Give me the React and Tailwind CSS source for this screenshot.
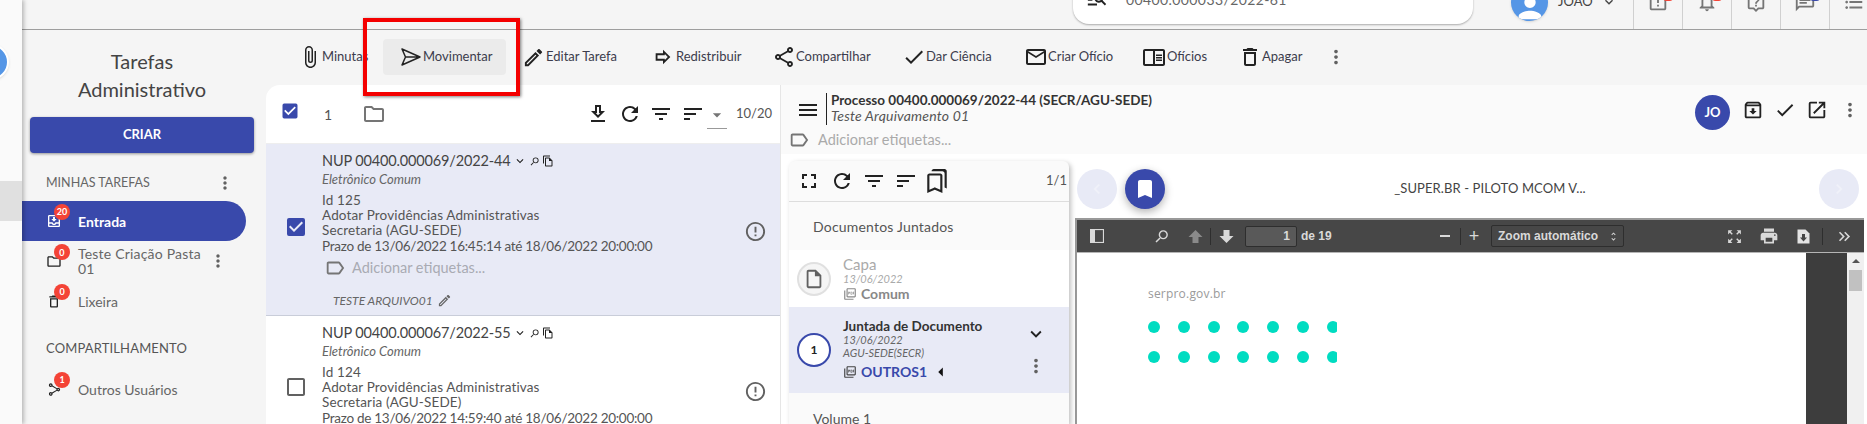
import React from 'react'
import {
  MdAttachFile, MdOutlineCreate, MdOutlineForward, MdOutlineShare, MdCheck, MdMailOutline,
  MdOutlineChromeReaderMode, MdMoreVert, MdOutlineLabel, MdOutlineFolder,
  MdOutlineGetApp, MdRefresh, MdFilterList, MdSort, MdArrowDropDown, MdMenu, MdFullscreen,
  MdOutlineBookmarks, MdBookmark, MdOutlineInsertDriveFile, MdOutlinePictureAsPdf,
  MdOutlineArchive, MdOpenInNew, MdCheckBox, MdCheckBoxOutlineBlank, MdErrorOutline,
  MdOutlineMoveToInbox, MdSearch, MdOutlineFileCopy, MdExpandMore, MdArrowLeft, MdChevronLeft,
  MdChevronRight, MdPrint, MdKeyboardDoubleArrowRight, MdUnfoldMore, MdOutlineDelete,
  MdOutlineNotifications, MdOutlineLiveHelp, MdOutlineChat, MdFormatListBulleted,
  MdOutlineAssignmentLate, MdOutlineManageSearch, MdPerson, MdKeyboardArrowDown,
  MdOutlineZoomOutMap
} from 'react-icons/md'

function PlaneIcon() {
  return (
    <svg width="20" height="18" viewBox="0 0 20 18" fill="none" stroke="#222" strokeWidth="1.5" strokeLinejoin="round">
      <path d="M1 1 L19 9 L1 17 L4.5 9 Z M4.5 9 H19" />
    </svg>
  )
}

function PdfArrow({ up, className }) {
  return (
    <svg className={className} width="15" height="15" viewBox="0 0 15 15" fill="currentColor">
      <path d={up ? 'M7.5 1 L14.5 8 H10.5 V14 H4.5 V8 H0.5 Z' : 'M7.5 14 L14.5 7 H10.5 V1 H4.5 V7 H0.5 Z'} />
    </svg>
  )
}

function PdfSave({ className }) {
  return (
    <svg className={className} width="13" height="15" viewBox="0 0 13 15">
      <path d="M0.5 0.5 H8.5 L12.5 4.5 V14.5 H0.5 Z" fill="#e4e4e4" />
      <path d="M5 5 H8 V8.5 H10 L6.5 12.5 L3 8.5 H5 Z" fill="#474747" />
    </svg>
  )
}

const actions = [
  { label: 'Minutas', icon: <MdAttachFile size={24} />, w: 'w-[96px]', gap: 'gap-0', pad: 'pl-[11px]' },
  { label: 'Movimentar', icon: <PlaneIcon />, w: 'w-[123px]', gap: 'gap-[2px]', pad: 'pl-[18px]', active: true },
  { label: 'Editar Tarefa', icon: <MdOutlineCreate size={23} />, w: 'w-[126px]', gap: 'gap-[1px]', pad: 'pl-[16px]' },
  { label: 'Redistribuir', icon: <MdOutlineForward size={22} />, w: 'w-[122px]', gap: 'gap-[2px]', pad: 'pl-[20px]' },
  { label: 'Compartilhar', icon: <MdOutlineShare size={24} />, w: 'w-[130px]', gap: 'gap-0', pad: 'pl-[18px]' },
  { label: 'Dar Ciência', icon: <MdCheck size={24} />, w: 'w-[122px]', gap: 'gap-0', pad: 'pl-[18px]' },
  { label: 'Criar Ofício', icon: <MdMailOutline size={24} />, w: 'w-[118px]', gap: 'gap-0', pad: 'pl-[18px]' },
  { label: 'Ofícios', icon: <MdOutlineChromeReaderMode size={24} />, w: 'w-[97px]', gap: 'gap-[1px]', pad: 'pl-[18px]' },
  { label: 'Apagar', icon: <MdOutlineDelete size={24} />, w: 'w-[97px]', gap: 'gap-0', pad: 'pl-[17px]' },
]

function NavBadge({ n }) {
  return (
    <span className="absolute left-[8px] top-[-9px] w-[16px] h-[16px] rounded-full bg-[#f44336] text-white text-[9px] font-bold flex items-center justify-center">
      {n}
    </span>
  )
}

function NavIcon({ children, n }) {
  return (
    <span className="relative w-[16px] h-[16px] flex items-center justify-center shrink-0">
      {children}
      <NavBadge n={n} />
    </span>
  )
}

function TaskItem({ selected, nup, id, prazo, className }) {
  return (
    <div className={`flex ${selected ? 'bg-[#e8eaf6] border-b border-[#c9cdd9]' : 'bg-white'} ${className}`}>
      <div className="w-[56px] shrink-0 flex items-center pl-[19px] text-[#616161]">
        {selected
          ? <MdCheckBox size={24} className="text-[#3949ab] -mt-[6px] -ml-[1px]" />
          : <MdCheckBoxOutlineBlank size={24} className="mt-[4px] -ml-[1px]" />}
      </div>
      <div className="flex-1 pt-[8px] text-[#555]">
        <div className="flex items-center h-[18px] text-[14.5px] text-[#444] tracking-[-0.15px]">
          {nup}
          <MdKeyboardArrowDown size={14} className="ml-[2px] text-[#222]" />
          <MdSearch size={11} className="ml-[2px] text-[#222] -scale-x-100" />
          <MdOutlineFileCopy size={12} className="ml-[2px] text-[#222]" />
        </div>
        <div className="text-[13px] italic leading-[16px] mt-[1px] text-[#666]">Eletrônico Comum</div>
        <div className="text-[13.5px] leading-[15.2px] mt-[6px] tracking-[0.14px]">
          <div>Id {id}</div>
          <div>Adotar Providências Administrativas</div>
          <div>Secretaria (AGU-SEDE)</div>
          <div className="tracking-[-0.27px]">{prazo}</div>
        </div>
        {selected && (
          <>
            <div className="flex items-center h-[20px] mt-[4px] pl-[2px] text-[#a9abb3] text-[14.5px]">
              <MdOutlineLabel size={22} className="text-[#757575]" />
              <span className="ml-[6px]">Adicionar etiquetas...</span>
            </div>
            <div className="flex items-center h-[16px] mt-[15px] pl-[11px] text-[12px] italic text-[#666]">
              TESTE ARQUIVO01
              <MdOutlineCreate size={15} className="ml-[4px]" />
            </div>
          </>
        )}
      </div>
      <div className="w-[56px] shrink-0 flex items-center pl-[20px] text-[#616161]">
        <MdErrorOutline size={23} className={selected ? 'mt-[3px]' : 'mt-[12px]'} />
      </div>
    </div>
  )
}

const dotCols = [0, 1, 2, 3, 4, 5, 6]

function DotRow({ className }) {
  return (
    <div className={`flex w-[189px] overflow-hidden ${className}`}>
      {dotCols.map((d) => (
        <span key={d} className="w-[12px] h-[12px] rounded-full bg-[#00dcc1] shrink-0 mr-[17.8px]" />
      ))}
    </div>
  )
}

export default function App() {
  return (
    <div className="w-[1867px] h-[424px] overflow-hidden flex bg-[#f5f5f5] font-[family-name:Lato,sans-serif] text-[#444]">
      {/* stub of the main nav */}
      <div className="w-[22px] shrink-0 h-full bg-[#fafafa] shadow-[2px_0_4px_rgba(0,0,0,0.25)] z-10 flex flex-col overflow-hidden">
        <div className="w-[36px] h-[36px] mt-[44px] -ml-[27px] rounded-full bg-[#5596e6] border-2 border-white shadow shrink-0" />
        <div className="h-[40px] mt-[101px] bg-[#e0e0e0] shrink-0" />
      </div>

      <div className="flex-1 min-w-0 flex flex-col">
        {/* top bar, mostly scrolled off */}
        <div className="h-[30px] shrink-0 border-b border-[#9e9e9e] overflow-hidden bg-[#f5f5f5]">
          <div className="h-[64px] -mt-[30px] flex items-center">
            <div className="ml-[1051px] w-[400px] h-[54px] shrink-0 bg-white rounded-b-[16px] shadow-[0_1px_2px_rgba(0,0,0,0.3)] flex items-center pl-[13px] self-start">
              <MdOutlineManageSearch size={22} className="text-[#222] mt-[4px]" />
              <span className="ml-[18px] text-[14px] text-[#666] tracking-[0.4px] mt-[4px]">00400.000033/2022-61</span>
            </div>
            <div className="ml-[38px] w-[37px] h-[37px] rounded-full bg-[#5596e6] shadow flex items-end justify-center overflow-hidden shrink-0">
              <MdPerson size={34} className="text-white -mb-[4px]" />
            </div>
            <span className="ml-[10px] text-[13px] w-[38px] shrink-0">JOÃO</span>
            <MdKeyboardArrowDown size={16} className="ml-[5px] shrink-0" />
            <div className="ml-[16px] flex h-full text-[#757575]">
              {[
                [<MdOutlineAssignmentLate size={22} />, 'bg-[#f44336]'],
                [<MdOutlineNotifications size={22} />, 'bg-[#f44336]'],
                [<MdOutlineLiveHelp size={22} />, ''],
                [<MdOutlineChat size={22} />, 'bg-[#3949ab]'],
                [<MdFormatListBulleted size={22} />, ''],
              ].map(([icon, badge], i) => (
                <div key={i} className="relative w-[49px] h-full border-l border-[#d0d0d0] flex items-center justify-center">
                  {icon}
                  {badge && <span className={`absolute left-[29px] top-[24px] w-[10px] h-[7px] rounded-full ${badge}`} />}
                </div>
              ))}
            </div>
          </div>
        </div>

        <div className="flex-1 min-h-0 flex">
          {/* sidebar */}
          <aside className="w-[244px] shrink-0 flex flex-col">
            <div className="mt-[17px] w-[224px] ml-[8px] text-center text-[20px] leading-[28px] text-[#444]">
              Tarefas<br />Administrativo
            </div>
            <button className="mt-[14px] ml-[8px] w-[224px] h-[36px] shrink-0 bg-[#3949ab] rounded-[4px] shadow-[0_1px_3px_rgba(0,0,0,0.4)] text-white text-[13px] font-bold">
              CRIAR
            </button>
            <div className="mt-[20px] h-[20px] pl-[24px] flex items-center text-[12.5px] text-[#666]">
              MINHAS TAREFAS
              <MdMoreVert size={20} className="ml-[65px] text-[#616161]" />
            </div>
            <div className="mt-[8px] w-[224px] h-[40px] bg-[#3949ab] rounded-r-[20px] flex items-center pl-[24px] text-white text-[14px] font-bold">
              <NavIcon n="20"><MdOutlineMoveToInbox size={16} /></NavIcon>
              <span className="ml-[16px]">Entrada</span>
            </div>
            <div className="mt-[4px] h-[31px] flex items-center pl-[24px] text-[14px] leading-[15px] text-[#666] tracking-[0.2px]">
              <span className="self-end mb-[7px]"><NavIcon n="0"><MdOutlineFolder size={17} className="text-[#222]" /></NavIcon></span>
              <span className="ml-[16px] w-[125px]">Teste Criação Pasta 01</span>
              <MdMoreVert size={20} className="ml-[5px] text-[#616161]" />
            </div>
            <div className="mt-[10px] h-[30px] flex items-center pl-[24px] text-[14px] text-[#666]">
              <NavIcon n="0"><MdOutlineDelete size={17} className="text-[#222]" /></NavIcon>
              <span className="ml-[16px]">Lixeira</span>
            </div>
            <div className="mt-[23px] h-[20px] pl-[24px] flex items-center text-[13px] text-[#555] tracking-[0.15px]">COMPARTILHAMENTO</div>
            <div className="mt-[15px] h-[30px] flex items-center pl-[24px] text-[14px] text-[#666]">
              <NavIcon n="1"><MdOutlineShare size={15} className="text-[#222] -scale-x-100" /></NavIcon>
              <span className="ml-[16px]">Outros Usuários</span>
            </div>
          </aside>

          <div className="flex-1 min-w-0 flex flex-col relative">
            {/* action bar */}
            <div className="h-[55px] shrink-0 pl-[21px] pb-[1px] flex items-center text-[13px] text-[#3c3c4c]">
              {actions.map((a) => (
                <div key={a.label} className={`${a.w} ${a.pad} ${a.gap} h-[36px] shrink-0 flex items-center whitespace-nowrap rounded-[4px] ${a.active ? 'bg-[#ebebeb]' : ''}`}>
                  <span className="text-[#222] flex items-center">{a.icon}</span>
                  <span>{a.label}</span>
                </div>
              ))}
              <MdMoreVert size={22} className="ml-[7px] text-[#616161]" />
            </div>

            {/* red highlight drawn over the screenshot */}
            <div className="absolute left-[97px] top-[-12px] w-[157px] h-[78px] border-4 border-[#f40000] shadow-[1px_1px_3px_rgba(0,0,0,0.5)] pointer-events-none z-20" />

            <div className="flex-1 min-h-0 flex">
              {/* task list */}
              <section className="w-[514px] shrink-0 bg-white rounded-tl-[14px] flex flex-col overflow-hidden">
                <div className="h-[59px] shrink-0 border-b border-[#eee] flex items-center pl-[15px] text-[#555]">
                  <MdCheckBox size={20} className="text-[#3949ab] -mt-[6px] -ml-[1px]" />
                  <span className="ml-[24px] text-[14px] w-[20px]">1</span>
                  <MdOutlineFolder size={24} className="ml-[18px] text-[#757575]" />
                  <div className="ml-[200px] flex items-center text-[#222]">
                    <MdOutlineGetApp size={24} />
                    <MdRefresh size={24} className="ml-[8px]" />
                    <MdFilterList size={24} className="ml-[7px]" />
                    <MdSort size={24} className="ml-[8px]" />
                    <span className="ml-[2px] w-[20px] h-[22px] border-b border-[#999] flex justify-center text-[#757575] mt-[8px]">
                      <MdArrowDropDown size={20} className="-mt-[2px]" />
                    </span>
                  </div>
                  <span className="ml-[9px] text-[13px]">10/20</span>
                </div>
                <TaskItem selected nup="NUP 00400.000069/2022-44" id="125" prazo="Prazo de 13/06/2022 16:45:14 até 18/06/2022 20:00:00" className="h-[172px] shrink-0" />
                <TaskItem nup="NUP 00400.000067/2022-55" id="124" prazo="Prazo de 13/06/2022 14:59:40 até 18/06/2022 20:00:00" className="h-[138px] shrink-0" />
              </section>

              {/* process panel */}
              <section className="flex-1 min-w-0 border-l border-[#e6e6e6] bg-[#fafafa] flex flex-col">
                <div className="h-[69px] shrink-0 flex flex-col">
                  <div className="h-[41px] pt-[8px] flex items-start">
                    <MdMenu size={24} className="ml-[15px] mt-[5px] text-[#222]" />
                    <div className="ml-[6px] h-[32px] border-l border-[#222] pl-[4px] flex flex-col text-[14px] leading-[15px]">
                      <span className="font-bold text-[13.5px] text-[#333]">Processo 00400.000069/2022-44 (SECR/AGU-SEDE)</span>
                      <span className="italic text-[#555] text-[14px] tracking-[0.2px]">Teste Arquivamento 01</span>
                    </div>
                    <div className="ml-auto pr-[6px] flex items-start">
                      <span className="mt-[2px] w-[35px] h-[35px] rounded-full bg-[#3949ab] text-white text-[13px] font-bold flex items-center justify-center shrink-0">JO</span>
                      <MdOutlineArchive size={22} className="ml-[12px] mt-[6px] text-[#222]" />
                      <MdCheck size={22} className="ml-[10px] mt-[6px] text-[#222]" />
                      <MdOpenInNew size={22} className="ml-[10px] mt-[6px] text-[#222]" />
                      <MdMoreVert size={22} className="ml-[11px] mt-[6px] text-[#616161]" />
                    </div>
                  </div>
                  <div className="flex items-center h-[20px] mt-[4px] pl-[7px] text-[14.5px] text-[#aaa]">
                    <MdOutlineLabel size={22} className="text-[#757575]" />
                    <span className="ml-[8px]">Adicionar etiquetas...</span>
                  </div>
                </div>
                <div className="h-[7px] shrink-0 bg-white" />

                <div className="flex-1 min-h-0 flex bg-white pl-[8px]">
                  {/* documents column */}
                  <div className="w-[280px] shrink-0 bg-[#fafafa] rounded-t-[6px] shadow-[2px_2px_5px_rgba(0,0,0,0.25)] z-10 flex flex-col overflow-hidden">
                    <div className="h-[41px] shrink-0 border-b border-[#ddd] flex items-center pl-[8px] text-[#222]">
                      <MdFullscreen size={24} />
                      <MdRefresh size={24} className="ml-[9px]" />
                      <MdFilterList size={24} className="ml-[8px]" />
                      <MdSort size={24} className="ml-[8px]" />
                      <MdOutlineBookmarks size={26} className="ml-[6px]" />
                      <span className="ml-[96px] text-[13px] text-[#555]">1/1</span>
                    </div>
                    <div className="h-[48px] shrink-0 pl-[24px] flex items-center text-[14px] text-[#555] tracking-[0.2px]">Documentos Juntados</div>
                    <div className="h-[57px] shrink-0 bg-white flex items-center pl-[8px]">
                      <div className="w-[34px] h-[34px] rounded-full border-2 border-[#e0e0e0] bg-[#f5f5f5] flex items-center justify-center shrink-0">
                        <MdOutlineInsertDriveFile size={22} className="text-[#616161]" />
                      </div>
                      <div className="ml-[12px] flex flex-col text-[#aaa]">
                        <span className="text-[15px] leading-[16px]">Capa</span>
                        <span className="text-[11px] leading-[12px] italic mt-[1px]">13/06/2022</span>
                        <span className="flex items-center text-[14px] leading-[16px] font-bold text-[#888] mt-[1px]">
                          <MdOutlinePictureAsPdf size={14} className="mr-[4px]" />Comum
                        </span>
                      </div>
                    </div>
                    <div className="h-[86px] shrink-0 bg-[#e8eaf6] flex items-center pl-[8px]">
                      <div className="w-[34px] h-[34px] rounded-full border-2 border-[#3949ab] bg-white flex items-center justify-center shrink-0 text-[12px] font-bold text-[#222]">1</div>
                      <div className="ml-[12px] w-[182px] flex flex-col">
                        <span className="text-[13.5px] leading-[16px] font-bold text-[#333]">Juntada de Documento</span>
                        <span className="text-[11px] leading-[12px] italic text-[#666]">13/06/2022</span>
                        <span className="text-[11px] leading-[13px] italic text-[#666]">AGU-SEDE(SECR)</span>
                        <span className="flex items-center text-[14px] leading-[18px] font-bold text-[#3949ab] mt-[2px]">
                          <MdOutlinePictureAsPdf size={14} className="mr-[4px] text-[#444]" />OUTROS1
                          <MdArrowLeft size={22} className="ml-[3px] text-[#111]" />
                        </span>
                      </div>
                      <div className="flex flex-col items-center text-[#222]">
                        <MdExpandMore size={22} />
                        <MdMoreVert size={22} className="mt-[10px] text-[#616161]" />
                      </div>
                    </div>
                    <div className="pl-[24px] pt-[15px] text-[14px] text-[#555]">Volume 1</div>
                  </div>

                  {/* viewer */}
                  <div className="flex-1 min-w-0 ml-[1px] bg-white flex flex-col">
                    <div className="h-[57px] shrink-0 flex items-center pl-[7px] pr-[8px] pb-[1px]">
                      <span className="w-[40px] h-[40px] rounded-full bg-[#e8eaf6] flex items-center justify-center text-[#f0f1f9]"><MdChevronLeft size={20} /></span>
                      <span className="ml-[8px] w-[40px] h-[40px] rounded-full bg-[#3949ab] shadow-[0_3px_8px_rgba(0,0,0,0.3)] flex items-center justify-center text-white"><MdBookmark size={24} /></span>
                      <span className="flex-1 text-center text-[13px] text-[#444] tracking-[0.1px] pr-[4px]">_SUPER.BR - PILOTO MCOM V...</span>
                      <span className="w-[40px] h-[40px] rounded-full bg-[#e8eaf6] flex items-center justify-center text-[#f0f1f9]"><MdChevronRight size={20} /></span>
                    </div>
                    <div className="flex-1 min-h-0 ml-[5px] mr-[3px] border-l-2 border-t-2 border-[#999] flex flex-col font-[family-name:'Liberation_Sans',sans-serif]">
                      <div className="h-[33px] shrink-0 bg-[#474747] border-b border-[#b5b5b5] flex items-center text-[#d9d9d9] text-[12px] font-bold whitespace-nowrap">
                        <svg className="ml-[13px] shrink-0" width="14" height="14" viewBox="0 0 14 14" fill="none" stroke="#d9d9d9"><rect x="0.5" y="0.5" width="13" height="13" strokeWidth="1.2" /><rect x="1" y="1" width="4" height="12" fill="#d9d9d9" stroke="none" /></svg>
                        <MdSearch size={17} className="ml-[49px] -scale-x-100 shrink-0" />
                        <PdfArrow up className="ml-[18px] text-[#8a8a8a] shrink-0" />
                        <span className="ml-[7px] w-[1px] h-[17px] bg-[#2e2e2e] shrink-0" />
                        <PdfArrow className="ml-[8px] shrink-0" />
                        <span className="ml-[11px] w-[52px] h-[21px] rounded-[2px] bg-[#595959] border border-[#2e2e2e] text-right pr-[6px] leading-[19px] shrink-0">1</span>
                        <span className="ml-[4px] w-[30px] shrink-0">de 19</span>
                        <span className="ml-[109px] w-[10px] h-[2px] bg-[#d9d9d9] shrink-0" />
                        <span className="ml-[10px] w-[1px] h-[17px] bg-[#2e2e2e] shrink-0" />
                        <span className="ml-[4px] w-[18px] text-center text-[18px] font-normal leading-none shrink-0">+</span>
                        <span className="ml-[8px] w-[133px] h-[22px] rounded-[2px] bg-[#474747] border border-[#2e2e2e] pl-[6px] flex items-center justify-between shrink-0">
                          Zoom automático
                          <MdUnfoldMore size={11} className="mr-[4px]" />
                        </span>
                        <MdOutlineZoomOutMap size={17} className="ml-[102px] shrink-0" />
                        <MdPrint size={20} className="ml-[16px] shrink-0" />
                        <PdfSave className="ml-[18px] shrink-0" />
                        <span className="ml-[12px] w-[1px] h-[17px] bg-[#2e2e2e] shrink-0" />
                        <MdKeyboardDoubleArrowRight size={19} className="ml-[12px] shrink-0" />
                      </div>
                      <div className="flex-1 min-h-0 flex">
                        <div className="flex-1 bg-white pl-[71px] pt-[33px] overflow-hidden">
                          <div className="text-[12px] leading-[16px] text-[#9a9a9a] font-[family-name:'Open_Sans',sans-serif] tracking-[0.2px]">serpro.gov.br</div>
                          <DotRow className="mt-[19px]" />
                          <DotRow className="mt-[18px]" />
                        </div>
                        <div className="w-[41px] shrink-0 bg-[#3d3d3d]" />
                        <div className="w-[17px] shrink-0 bg-[#f0f0f0] flex flex-col items-center">
                          <span className="mt-[6px] w-0 h-0 border-x-[4px] border-x-transparent border-b-[4px] border-b-[#555]" />
                          <span className="mt-[7px] w-[13px] h-[21px] bg-[#c1c1c1]" />
                        </div>
                      </div>
                    </div>
                  </div>
                </div>
              </section>
            </div>
          </div>
        </div>
      </div>
    </div>
  )
}
